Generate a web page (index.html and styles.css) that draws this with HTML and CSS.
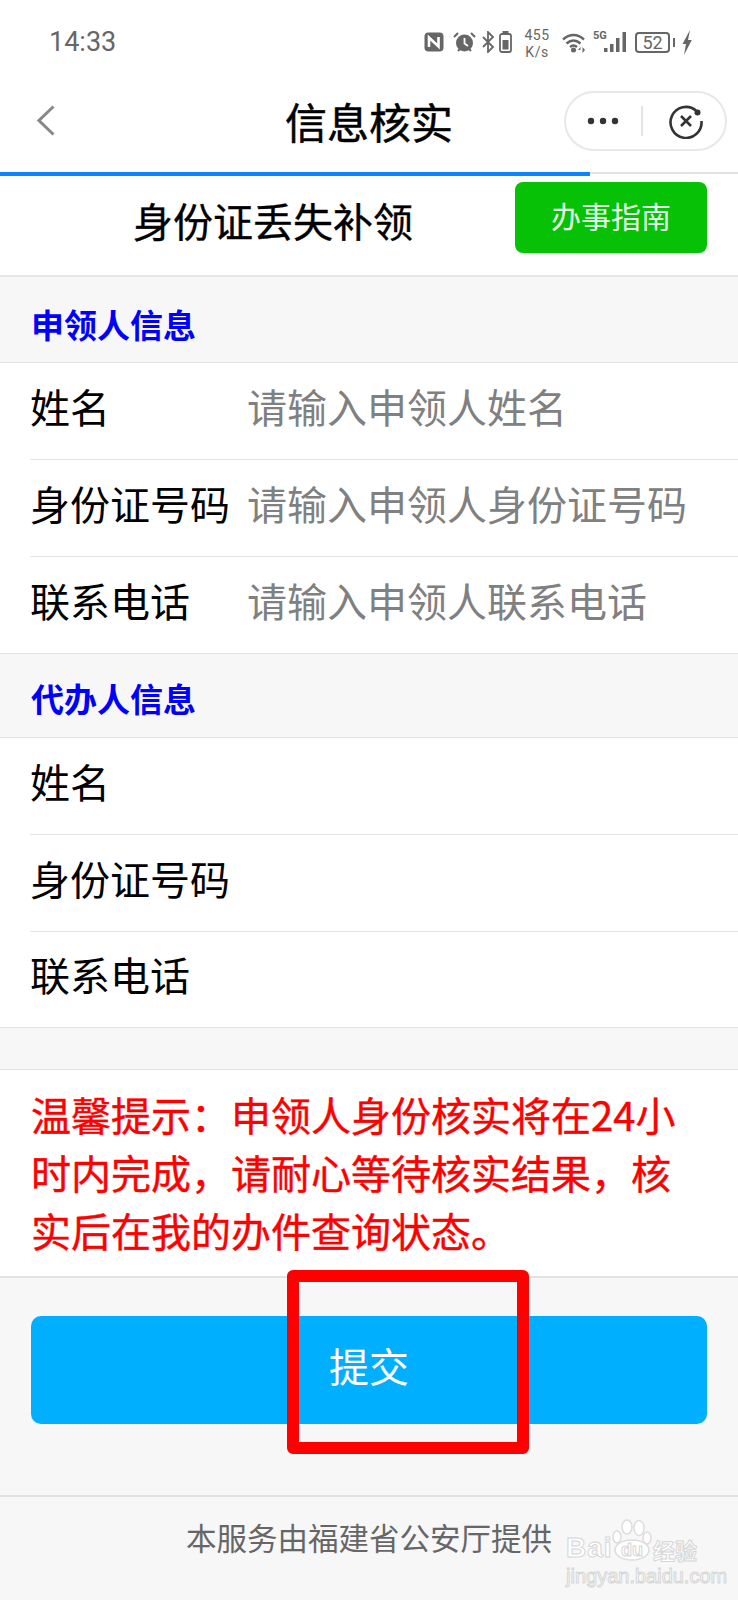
FILE: index.html
```html
<!DOCTYPE html>
<html lang="zh-CN">
<head>
    <meta charset="UTF-8">
    <meta name="viewport" content="width=device-width, initial-scale=1.0">
    <title>信息核实</title>
    <link rel="stylesheet" href="styles.css">
</head>
<body>
    <div class="page">
        <div class="status-bar">
            <span class="clock">14:33</span>
            <div class="status-icons">
                <svg class="ic-nfc" width="20" height="20" viewBox="0 0 20 20">
                    <rect x="0.5" y="0.5" width="19" height="19" rx="4" fill="#666"/>
                    <path d="M5 15V5.500L14.500 14.500V5" fill="none" stroke="#fff" stroke-width="2.600"/>
                </svg>
                <svg class="ic-alarm" width="23" height="22" viewBox="0 0 23 22">
                    <circle cx="11.500" cy="12" r="8.500" fill="#666"/>
                    <path d="M1 6L5 2M22 6L18 2M5 20l2-2M18 20l-2-2" stroke="#666" stroke-width="2" fill="none"/>
                    <path d="M11.500 7v5.500l3.500 2.500" stroke="#fff" stroke-width="1.800" fill="none"/>
                </svg>
                <svg class="ic-bt" width="13" height="22" viewBox="0 0 13 22">
                    <path d="M1 6l10 10-5 5V1l5 5L1 16" fill="none" stroke="#666" stroke-width="1.800"/>
                </svg>
                <svg class="ic-smallbat" width="13" height="22" viewBox="0 0 13 22">
                    <rect x="1" y="3" width="11" height="18" rx="2" fill="none" stroke="#666" stroke-width="1.800"/>
                    <rect x="3.500" y="0" width="6" height="2" fill="#666"/>
                    <rect x="3.500" y="9" width="6" height="9.500" fill="#666"/>
                </svg>
                <div class="speed"><span>455</span><span>K/s</span></div>
                <svg class="ic-wifi" width="25" height="21" viewBox="0 0 25 21">
                    <path d="M1 7.500C7.500 1.500 15.500 1.500 22 7.500M4.500 11.500C9 7.500 14 7.500 18.500 11.500M8 15C10.500 13 12.500 13 15 15" fill="none" stroke="#666" stroke-width="2.400"/>
                    <circle cx="11.500" cy="18" r="2.500" fill="#666"/>
                    <path d="M18.500 15l-2.500 3h2.500zM20.500 15v6l2.500-3z" fill="#666"/>
                </svg>
                <span class="net">5G</span>
                <svg class="ic-signal" width="23" height="21" viewBox="0 0 23 21">
                    <rect x="0" y="16" width="3.500" height="4" fill="#666"/>
                    <rect x="6" y="12" width="3.500" height="8" fill="#666"/>
                    <rect x="12" y="6" width="3.500" height="14" fill="#666"/>
                    <rect x="18.500" y="0" width="3.500" height="20" fill="#666"/>
                </svg>
                <div class="battery">52</div>
                <span class="battery-nub"></span>
                <svg class="ic-bolt" width="10" height="25" viewBox="0 0 10 25">
                    <path d="M8 0L0.500 14H4L2 25 9.800 10H6z" fill="#666"/>
                </svg>
            </div>
        </div>

        <div class="nav-bar">
            <svg class="back" width="18" height="31" viewBox="0 0 18 31">
                <path d="M16.500 1.500L2 15.500l14.500 14" fill="none" stroke="#888" stroke-width="3"/>
            </svg>
            <h1>信息核实</h1>
            <div class="capsule">
                <svg width="32" height="8" viewBox="0 0 32 8">
                    <circle cx="4" cy="4" r="3.200" fill="#333"/>
                    <circle cx="16" cy="4" r="3.200" fill="#333"/>
                    <circle cx="28" cy="4" r="3.200" fill="#333"/>
                </svg>
                <span class="capsule-line"></span>
                <svg width="36" height="36" viewBox="0 0 36 36">
                    <path d="M28 7.500A15.500 15.500 0 1 0 33.500 18" fill="none" stroke="#333" stroke-width="2.600"/>
                    <circle cx="29.500" cy="9.500" r="3" fill="#333"/>
                    <path d="M13 13l10 10M23 13L13 23" stroke="#333" stroke-width="2.600"/>
                </svg>
            </div>
        </div>

        <div class="progress"><div class="progress-bar"></div></div>

        <div class="title-row">
            <div class="service-name">身份证丢失补领</div>
            <a class="guide-btn">办事指南</a>
        </div>

        <div class="section-title section-first">申领人信息</div>
        <div class="form-group">
            <div class="form-row"><span class="label">姓名</span><span class="hint">请输入申领人姓名</span></div>
            <div class="form-row"><span class="label">身份证号码</span><span class="hint">请输入申领人身份证号码</span></div>
            <div class="form-row"><span class="label">联系电话</span><span class="hint">请输入申领人联系电话</span></div>
        </div>

        <div class="section-title">代办人信息</div>
        <div class="form-group form-group-last">
            <div class="form-row"><span class="label">姓名</span></div>
            <div class="form-row"><span class="label">身份证号码</span></div>
            <div class="form-row"><span class="label">联系电话</span></div>
        </div>

        <div class="notice">温馨提示：申领人身份核实将在24小时内完成，请耐心等待核实结果，核实后在我的办件查询状态。</div>

        <div class="submit-wrap">
            <button class="submit-btn">提交</button>
        </div>

        <div class="footer">本服务由福建省公安厅提供</div>

        <!-- annotation drawn over the screenshot -->
        <div class="red-box"></div>

        <div class="watermark">
            <div class="wm-top">
                <span class="wm-bai">Bai</span>
                <div class="wm-paw">
                    <svg width="40" height="42" viewBox="0 0 40 42">
                        <g fill="#fff" stroke="#ddd" stroke-width="1.500">
                            <ellipse cx="5" cy="18" rx="4" ry="6"/>
                            <ellipse cx="15" cy="8" rx="5" ry="7"/>
                            <ellipse cx="27" cy="9" rx="5" ry="7.500"/>
                            <ellipse cx="35" cy="19" rx="4" ry="6"/>
                            <ellipse cx="20" cy="31" rx="17" ry="10"/>
                        </g>
                    </svg>
                    <span class="wm-du">du</span>
                </div>
                <span class="wm-jy">经验</span>
            </div>
            <div class="wm-url">jingyan.baidu.com</div>
        </div>
    </div>
</body>
</html>
```

FILE: styles.css
```css
* {
    box-sizing: border-box;
}
body {
    margin: 0;
    font-family: "Noto Sans CJK SC", "Noto Sans", sans-serif;
    background-color: #f7f7f7;
}
.page {
    position: relative;
    width: 738px;
    height: 1600px;
    overflow: hidden;
    background: #f7f7f7;
}

/* Status bar */
.status-bar {
    height: 80px;
    background: #fff;
    display: flex;
    justify-content: space-between;
    align-items: flex-start;
    padding: 0 46px 0 49px;
}
.clock {
    margin-top: 24px;
    font-family: Roboto, sans-serif;
    font-size: 27px;
    line-height: 36px;
    color: #666;
}
.status-icons {
    display: flex;
    align-items: flex-start;
    margin-top: 28px;
}
.status-icons svg {
    display: block;
    flex: none;
}
.ic-nfc { margin-top: 4px; }
.ic-alarm { margin: 3px 0 0 9px; }
.ic-bt { margin: 3px 0 0 6px; }
.ic-smallbat { margin: 3px 0 0 4px; }
.speed {
    display: flex;
    flex-direction: column;
    align-items: center;
    width: 26px;
    margin: -1px 0 0 12px;
    font-family: Roboto, sans-serif;
    font-size: 14px;
    line-height: 16.500px;
    letter-spacing: 0.500px;
    color: #666;
}
.ic-wifi { margin: 4px 0 0 12px; }
.net {
    margin: 3px 0 0 6px;
    font-family: Roboto, sans-serif;
    font-size: 11px;
    line-height: 10px;
    font-weight: 700;
    color: #666;
    width: 11px;
}
.ic-signal { margin-top: 4px; }
.battery {
    width: 35px;
    height: 21px;
    margin: 4px 0 0 8px;
    border: 2px solid #666;
    border-radius: 4px;
    font-family: Roboto, sans-serif;
    font-size: 18px;
    line-height: 17px;
    text-align: center;
    color: #666;
}
.battery-nub {
    width: 2px;
    height: 9px;
    margin: 10px 0 0 3px;
    background: #666;
}
.ic-bolt { margin: 2px 0 0 7px; }

/* Nav bar */
.nav-bar {
    height: 92px;
    background: #fff;
    display: grid;
    grid-template-columns: 1fr auto 1fr;
    align-items: center;
    padding: 0 11px 11px 37px;
}
.nav-bar h1 {
    margin: 0;
    font-size: 42px;
    line-height: 60px;
    font-weight: 400;
    -webkit-text-stroke: 0.500px #000;
    color: #000;
    position: relative;
    left: -13px;
}
.capsule {
    justify-self: end;
    width: 163px;
    height: 60px;
    border: 2px solid #e8e8e8;
    border-radius: 30px;
    display: flex;
    align-items: center;
    padding-left: 21px;
}
.capsule-line {
    width: 2px;
    height: 30px;
    margin: 0 25px 0 22px;
    background: #e4e4e4;
}
.progress {
    height: 4px;
    background: #fff;
    border-top: 2px solid #e2e2e2;
    position: relative;
}
.progress-bar {
    position: absolute;
    top: -2px;
    left: 0;
    width: 590px;
    height: 4px;
    background: #0a84ff;
}

/* Title row */
.title-row {
    height: 101px;
    background: #fff;
    border-bottom: 2px solid #e6e6e6;
    display: flex;
    padding: 6px 31px 0 31px;
    align-items: flex-start;
}
.service-name {
    flex: 1;
    margin-top: 9px;
    font-size: 40px;
    line-height: 58px;
    -webkit-text-stroke: 0.400px #000;
    text-align: center;
    color: #000;
}
.guide-btn {
    width: 192px;
    height: 71px;
    background: #06c106;
    border-radius: 8px;
    color: #e8f8e8;
    font-size: 30px;
    line-height: 66px;
    text-align: center;
}

/* Form */
.section-title {
    height: 83px;
    padding: 20px 0 0 31px;
    font-size: 33px;
    line-height: 48px;
    font-weight: 700;
    color: #0000ff;
    background: #f7f7f7;
}
.section-first {
    height: 85px;
    padding-top: 23px;
}
.form-group {
    background: #fff;
    border-top: 1px solid #e2e2e2;
    border-bottom: 1px solid #e2e2e2;
    padding-left: 30px;
}
.form-row {
    height: 97px;
    display: flex;
    align-items: center;
    padding-bottom: 11px;
    border-bottom: 1px solid #e4e4e4;
    font-size: 40px;
}
.form-row:last-child {
    height: 96px;
    border-bottom: none;
}
.form-group-last .form-row:last-child {
    height: 95px;
}
.label {
    width: 217px;
    flex: none;
    color: #000;
}
.hint {
    color: #808080;
}

.notice {
    margin-top: 41px;
    height: 209px;
    padding: 15px 31px 0 31px;
    background: #fff;
    border-top: 1px solid #e2e2e2;
    border-bottom: 2px solid #e2e2e2;
    color: #ff0000;
    -webkit-text-stroke: 0.400px #ff0000;
    font-size: 40px;
    line-height: 58px;
}
.submit-wrap {
    height: 219px;
    padding: 38px 31px 0 31px;
    border-bottom: 2px solid #e2e2e2;
}
.submit-btn {
    display: block;
    width: 100%;
    height: 108px;
    border: none;
    border-radius: 10px;
    padding: 0 0 10px 0;
    background: #00b0ff;
    color: #fff;
    font-family: inherit;
    font-size: 40px;
}
.footer {
    padding: 17px 0 0 186px;
    font-size: 30.500px;
    line-height: 46px;
    color: #666;
}

/* Red annotation box */
.red-box {
    position: absolute;
    left: 287px;
    top: 1270px;
    width: 242px;
    height: 184px;
    border: 12px solid #ff0000;
    border-radius: 6px;
}

/* Baidu watermark */
.watermark {
    position: absolute;
    left: 566px;
    top: 1519px;
    width: 134px;
}
.wm-top {
    display: flex;
    align-items: flex-end;
    height: 44px;
}
.wm-bai, .wm-du, .wm-jy, .wm-url {
    color: #fff;
    -webkit-text-stroke: 1px #d6d6d6;
    font-family: "Liberation Sans", sans-serif;
}
.wm-bai {
    font-size: 28px;
    line-height: 30px;
    font-weight: 700;
    letter-spacing: 1px;
    width: 46px;
}
.wm-paw {
    position: relative;
    width: 41px;
    height: 44px;
    flex: none;
}
.wm-du {
    position: absolute;
    left: 9px;
    bottom: 3px;
    font-size: 18px;
    line-height: 20px;
    font-weight: 700;
}
.wm-jy {
    font-family: "Noto Sans CJK SC", sans-serif;
    font-size: 22px;
    line-height: 28px;
    font-weight: 700;
    white-space: nowrap;
}
.wm-url {
    font-size: 20px;
    line-height: 24px;
    white-space: nowrap;
    margin-top: 1px;
}
```
